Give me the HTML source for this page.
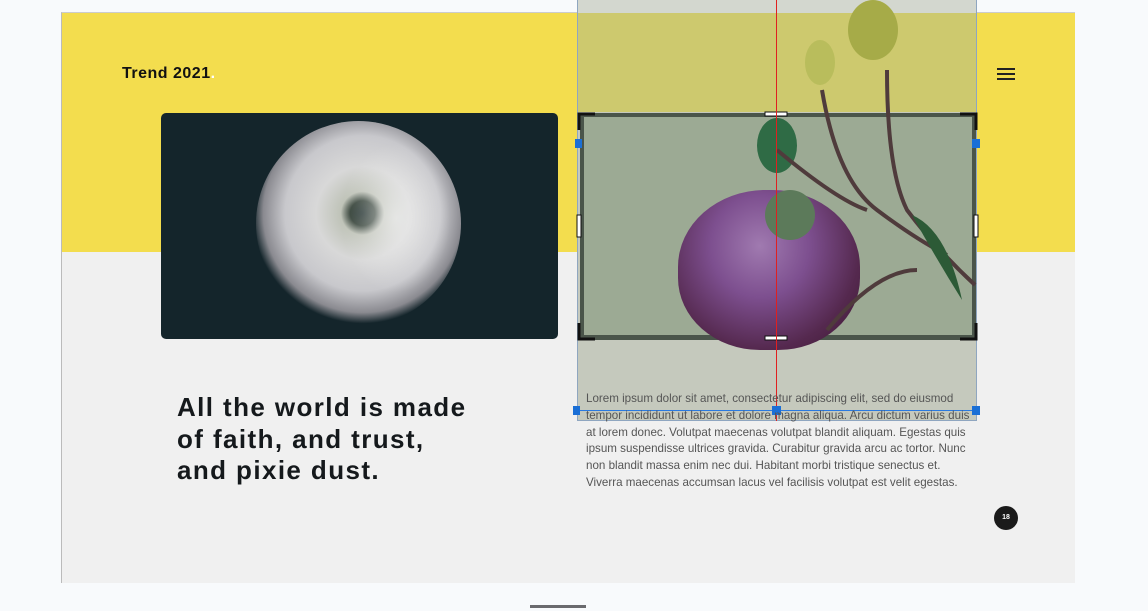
<!DOCTYPE html>
<html><head><meta charset="utf-8"><style>
*{margin:0;padding:0;box-sizing:border-box}
body{width:1148px;height:611px;background:#f8fafc;position:relative;overflow:hidden;font-family:"Liberation Sans",sans-serif}
.abs{position:absolute}
</style></head><body>
<div class="abs" style="left:61px;top:12px;width:1014px;height:571px;background:#f0f0f0;border-left:1px solid #bbb;border-top:1px solid #ccc"></div>
<div class="abs" style="left:62px;top:13px;width:1013px;height:239px;background:#f3dd4e"></div>
<div class="abs" style="left:122px;top:65px;font-size:16px;font-weight:bold;color:#111;letter-spacing:0.5px">Trend 2021<span style="color:#fff">.</span></div>
<div class="abs" style="left:997px;top:68px;width:18px;height:2px;background:#222;box-shadow:0 5px 0 #222,0 10px 0 #222"></div>
<!-- left image -->
<div class="abs" style="left:161px;top:113px;width:397px;height:226px;background:#14252b;border-radius:5px;overflow:hidden">
<div class="abs" style="left:95px;top:8px;width:205px;height:205px;border-radius:50%;background:radial-gradient(circle at 52% 45%,#1a2a28 0,#2c3a30 8%,#bfc3b8 14%,#d8d8d8 30%,#c8c8cc 50%,#8a8a90 64%,rgba(20,37,43,0) 71%)"></div>
<div class="abs" style="left:180px;top:30px;width:110px;height:150px;border-radius:50%;background:radial-gradient(ellipse,rgba(240,240,240,.7),rgba(240,240,240,0) 70%)"></div>
</div>
<!-- overlay -->
<div class="abs" style="left:577px;top:0;width:400px;height:421px;background:#c5c9bd;border:1px solid #8fa6c0"></div>
<div class="abs" style="left:578px;top:13px;width:398px;height:99px;background:#cdc96e"></div>
<div class="abs" style="left:578px;top:0;width:398px;height:13px;background:#d3d7cf"></div>
<div class="abs" style="left:580px;top:113px;width:396px;height:227px;background:#9caa94;border:5px solid #4a554a;border-width:4px 4px 5px 4px"></div>
<!-- rose -->
<div class="abs" style="left:678px;top:190px;width:182px;height:160px;border-radius:48% 48% 45% 45%;background:radial-gradient(ellipse at 45% 35%,#a07ab0 0,#7d4f8f 35%,#55294f 70%,#3b1530 100%)"></div>
<div class="abs" style="left:765px;top:190px;width:50px;height:50px;border-radius:50%;background:#5c7a5a"></div>
<div class="abs" style="left:757px;top:118px;width:40px;height:55px;border-radius:50%;background:#2f6b45"></div>
<div class="abs" style="left:848px;top:0;width:50px;height:60px;border-radius:50%;background:#a6ab48"></div>
<div class="abs" style="left:805px;top:40px;width:30px;height:45px;border-radius:50%;background:#b9bd5c"></div>
<svg class="abs" style="left:577px;top:0" width="400" height="360"><g fill="none" stroke="#4f3b3c" stroke-width="4"><path d="M310 70 Q310 170 330 210 Q360 250 398 285"/><path d="M245 90 Q260 180 300 210 Q340 240 370 255"/><path d="M200 150 Q260 200 290 210"/><path d="M250 330 Q300 270 340 270"/></g><path d="M335 215 Q370 230 385 300 Q360 260 335 215Z" fill="#2c5a36"/></svg>
<!-- frame corners -->
<svg class="abs" style="left:575px;top:110px" width="405" height="235"><g stroke="#111" stroke-width="3" fill="none"><path d="M4 20V4H20M385 4H401V20M4 213V229H20M385 229H401V213"/></g><g fill="#fff" stroke="#111"><rect x="190" y="2" width="22" height="4"/><rect x="190" y="226" width="22" height="4"/><rect x="2" y="105" width="4" height="22"/><rect x="399" y="105" width="4" height="22"/></g><g fill="#1a6fd6"><rect x="0" y="29" width="7" height="9"/><rect x="397" y="29" width="8" height="9"/></g></svg>
<div class="abs" style="left:776px;top:0;width:1px;height:421px;background:#e02020"></div>
<div class="abs" style="left:578px;top:410px;width:398px;height:1px;background:#2a7ae0"></div>
<div class="abs" style="left:573px;top:406px;width:7px;height:9px;background:#1a6fd6"></div>
<div class="abs" style="left:772px;top:406px;width:9px;height:9px;background:#1a6fd6"></div>
<div class="abs" style="left:972px;top:406px;width:8px;height:9px;background:#1a6fd6"></div>
<div class="abs" style="left:586px;top:391px;width:392px;font-size:11.6px;line-height:16.8px;color:#555;white-space:nowrap">Lorem ipsum dolor sit amet, consectetur adipiscing elit, sed do eiusmod<br>tempor incididunt ut labore et dolore magna aliqua. Arcu dictum varius duis<br>at lorem donec. Volutpat maecenas volutpat blandit aliquam. Egestas quis<br>ipsum suspendisse ultrices gravida. Curabitur gravida arcu ac tortor. Nunc<br>non blandit massa enim nec dui. Habitant morbi tristique senectus et.<br>Viverra maecenas accumsan lacus vel facilisis volutpat est velit egestas.</div>
<div class="abs" style="left:177px;top:392px;font-size:26px;font-weight:bold;line-height:31.5px;color:#15191c;letter-spacing:1.4px;white-space:nowrap">All the world is made<br>of faith, and trust,<br>and pixie dust.</div>
<div class="abs" style="left:994px;top:506px;width:24px;height:24px;border-radius:50%;background:#1a1a1a;color:#fff;font-size:7px;font-weight:bold;text-align:center;line-height:24px">18</div>
<div class="abs" style="left:530px;top:605px;width:56px;height:3px;background:#6a6a6e"></div>
</body></html>
